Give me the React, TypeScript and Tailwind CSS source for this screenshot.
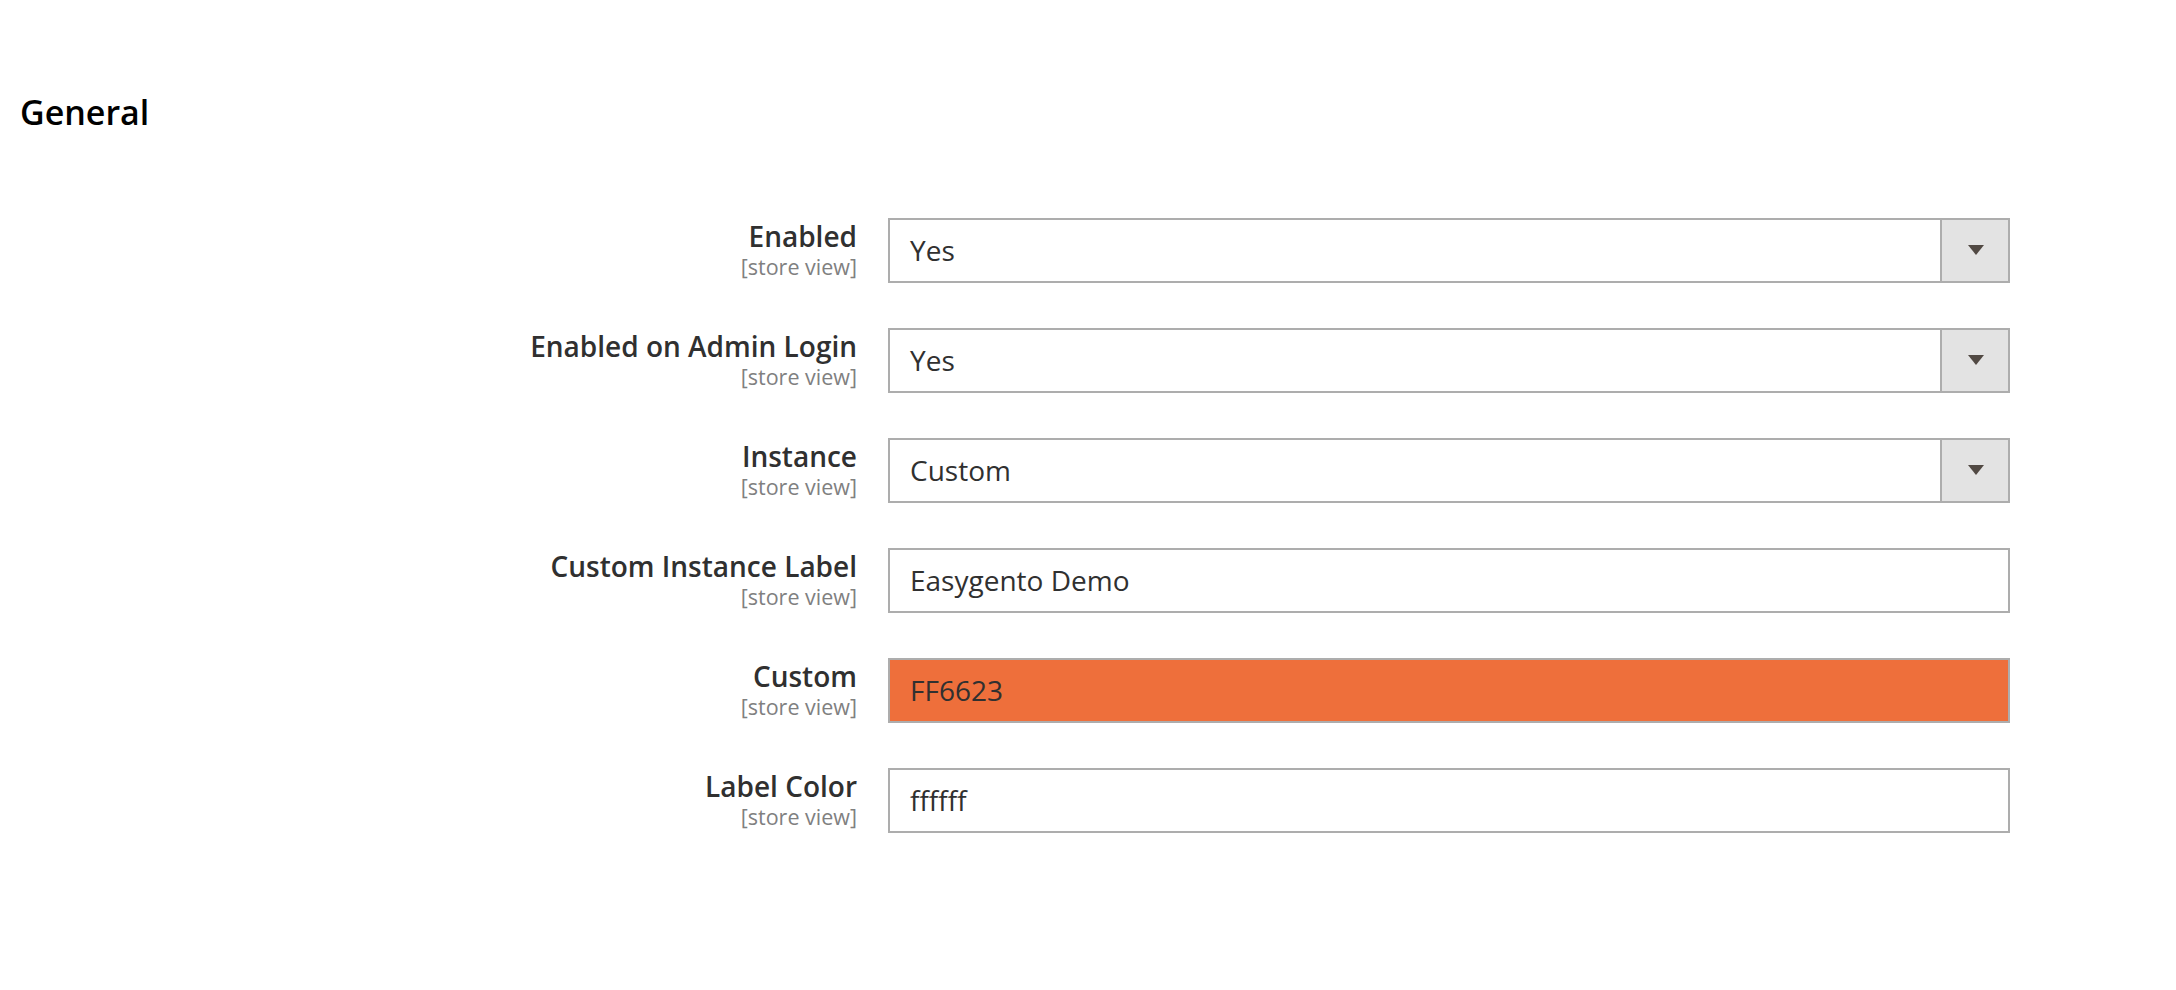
const rows = [
  { label: 'Enabled', value: 'Yes', type: 'select' },
  { label: 'Enabled on Admin Login', value: 'Yes', type: 'select' },
  { label: 'Instance', value: 'Custom', type: 'select' },
  { label: 'Custom Instance Label', value: 'Easygento Demo', type: 'text' },
  { label: 'Custom', value: 'FF6623', type: 'color' },
  { label: 'Label Color', value: 'ffffff', type: 'text' },
];

function Field({ value, type }: { value: string; type: string }) {
  const bg = type === 'color' ? 'bg-[#ee6f3b]' : 'bg-white';
  return (
    <div className={`flex h-[65px] w-[1122px] items-stretch border-2 border-[#adadad] ${bg}`}>
      <div className="flex flex-1 items-center pl-[20px] text-[28px] text-[#303030]">{value}</div>
      {type === 'select' && (
        <div className="flex w-[68px] items-center justify-center border-l-2 border-[#adadad] bg-[#e3e3e3]">
          <svg width="16" height="10" viewBox="0 0 16 10" className="ml-[2px]">
            <path d="M0 0 H16 L8 10 Z" fill="#514943" />
          </svg>
        </div>
      )}
    </div>
  );
}

export default function App() {
  return (
    <div className="min-h-[990px] bg-white pl-[20px] font-['Open_Sans',sans-serif]">
      <h2 className="pt-[92px] text-[34px] font-semibold leading-[1.2] text-black">General</h2>

      <div className="mt-[85px] flex flex-col gap-[45px]">
        {rows.map((r) => (
          <div key={r.label} className="flex">
            <div className="w-[837px] pt-[2px] text-right">
              <div className="text-[28px] font-semibold leading-[1.2] text-[#303030]">{r.label}</div>
              <div className="mt-[1px] text-[21.5px] leading-[1.2] text-[#808080]">[store view]</div>
            </div>
            <div className="ml-[31px]">
              <Field value={r.value} type={r.type} />
            </div>
          </div>
        ))}
      </div>
    </div>
  );
}
